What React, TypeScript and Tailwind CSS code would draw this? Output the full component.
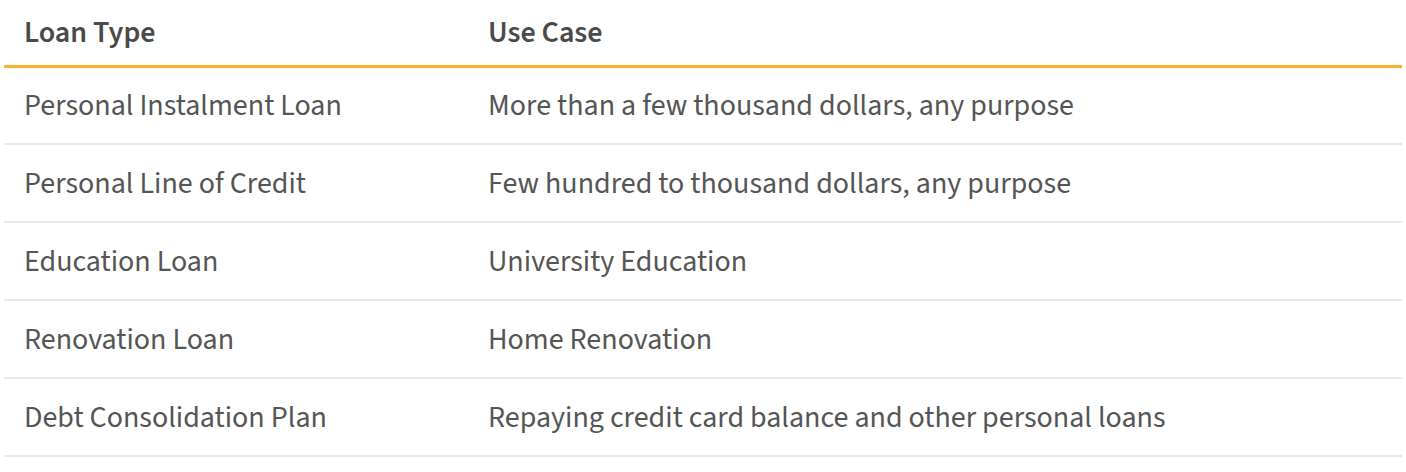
import React from 'react';

interface LoanRow {
  type: string;
  useCase: string;
}

const loans: LoanRow[] = [
  { type: 'Personal Instalment Loan', useCase: 'More than a few thousand dollars, any purpose' },
  { type: 'Personal Line of Credit', useCase: 'Few hundred to thousand dollars, any purpose' },
  { type: 'Education Loan', useCase: 'University Education' },
  { type: 'Renovation Loan', useCase: 'Home Renovation' },
  { type: 'Debt Consolidation Plan', useCase: 'Repaying credit card balance and other personal loans' },
];

const App: React.FC = () => {
  return (
    <div className="bg-white w-[1406px] h-[472px] px-[4px] font-['Source_Sans_3','Lato',sans-serif]">
      <table className="w-full border-collapse text-left">
        <thead>
          <tr className="h-[66px] border-b-[3px] border-[#f8b32d]">
            <th className="w-[464px] pl-[20px] text-[30px] font-semibold text-[#4a4a4a]">Loan Type</th>
            <th className="pl-[20px] text-[30px] font-semibold text-[#4a4a4a]">Use Case</th>
          </tr>
        </thead>
        <tbody>
          {loans.map((loan) => (
            <tr key={loan.type} className="h-[78px] border-b-2 border-[#e6e9ec]">
              <td className="pl-[20px] text-[30px] text-[#555555]">{loan.type}</td>
              <td className="pl-[20px] text-[30px] text-[#555555]">{loan.useCase}</td>
            </tr>
          ))}
        </tbody>
      </table>
    </div>
  );
};

export default App;
